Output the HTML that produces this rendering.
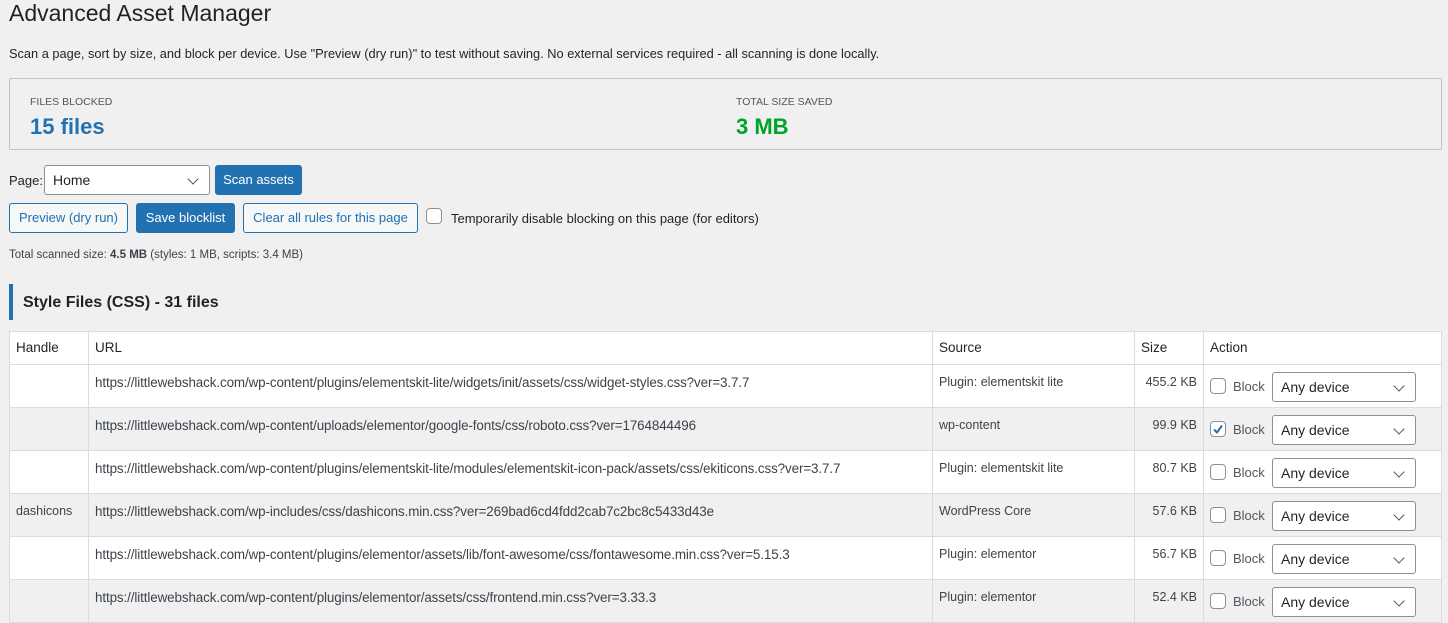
<!DOCTYPE html>
<html><head><meta charset="utf-8"><style>
*{box-sizing:border-box}
body{margin:0;background:#f0f0f1;font-family:"Liberation Sans",sans-serif;color:#1d2327;font-size:13px;width:1448px;height:623px;overflow:hidden;position:relative}
.a{position:absolute;white-space:nowrap}
h1{position:absolute;left:9px;top:0;margin:0;font-size:23px;font-weight:400;line-height:26px}
.box{position:absolute;left:9px;top:78px;width:1433px;height:72px;border:1px solid #c3c4c7;background:#f0f0f1;border-radius:2px}
.lbl{font-size:10.5px;color:#50575e;text-transform:uppercase}
.big{font-size:22px;font-weight:600}
.btn{position:absolute;height:30px;border:1px solid #2271b1;border-radius:3px;color:#2271b1;background:#f6f7f7;font-size:13px;line-height:28px;text-align:center}
.pri{background:#2271b1;color:#fff}
.sel{position:absolute;background:#fff;border:1px solid #8c8f94;border-radius:3px;font-size:14px;padding-left:8px;line-height:28px}
.sel:after{content:"";position:absolute;right:12px;top:9px;width:7px;height:7px;border-right:1.6px solid #50575e;border-bottom:1.6px solid #50575e;transform:rotate(45deg)}
.cb{position:absolute;width:16px;height:16px;border:1px solid #8c8f94;border-radius:4px;background:#fff}
table{position:absolute;left:9px;top:331px;width:1433px;border-collapse:collapse;background:#fff;table-layout:fixed}
td,th{border:1px solid #dcdcde;font-weight:400;text-align:left;vertical-align:top;padding:10px 6px 8px;font-size:12.5px;color:#3c434a;position:relative;white-space:nowrap}
td.u{font-size:13.4px;letter-spacing:-0.1px}
th{height:33px;padding:8px 6px;font-size:13.5px;color:#1d2327}
td{height:43px}
tr.g td{background:#f0f0f1}
td.s{text-align:right}
</style></head><body>
<h1>Advanced Asset Manager</h1>
<div class="a" style="left:9px;top:46px;font-size:12.8px">Scan a page, sort by size, and block per device. Use "Preview (dry run)" to test without saving. No external services required - all scanning is done locally.</div>
<div class="box">
<div class="a lbl" style="left:20px;top:17px">Files blocked</div>
<div class="a big" style="left:20px;top:35px;color:#2271b1">15 files</div>
<div class="a lbl" style="left:726px;top:17px">Total size saved</div>
<div class="a big" style="left:726px;top:35px;color:#00a32a">3 MB</div>
</div>
<div class="a" style="left:9px;top:173px">Page:</div>
<div class="sel" style="left:44px;top:165px;width:166px;height:30px">Home</div>
<div class="btn pri" style="left:215px;top:165px;width:87px">Scan assets</div>
<div class="btn" style="left:9px;top:203px;width:119px">Preview (dry run)</div>
<div class="btn pri" style="left:136px;top:203px;width:99px">Save blocklist</div>
<div class="btn" style="left:243px;top:203px;width:175px">Clear all rules for this page</div>
<div class="cb" style="left:426px;top:208px"></div>
<div class="a" style="left:451px;top:211px">Temporarily disable blocking on this page (for editors)</div>
<div class="a" style="left:9px;top:249px;font-size:11.5px;color:#3c434a">Total scanned size: <b>4.5 MB</b> (styles: 1 MB, scripts: 3.4 MB)</div>
<div class="a" style="left:9px;top:284px;width:4px;height:36px;background:#2271b1"></div>
<div class="a" style="left:23px;top:294px;font-size:16px;font-weight:600">Style Files (CSS) - 31 files</div>
<table>
<tr><th style="width:79px">Handle</th><th style="width:844px">URL</th><th style="width:202px">Source</th><th style="width:69px">Size</th><th>Action</th></tr>
<tr><td></td><td class="u">https://littlewebshack.com/wp-content/plugins/elementskit-lite/widgets/init/assets/css/widget-styles.css?ver=3.7.7</td><td>Plugin: elementskit lite</td><td class="s">455.2 KB</td><td></td></tr>
<tr class="g"><td></td><td class="u">https://littlewebshack.com/wp-content/uploads/elementor/google-fonts/css/roboto.css?ver=1764844496</td><td>wp-content</td><td class="s">99.9 KB</td><td></td></tr>
<tr><td></td><td class="u">https://littlewebshack.com/wp-content/plugins/elementskit-lite/modules/elementskit-icon-pack/assets/css/ekiticons.css?ver=3.7.7</td><td>Plugin: elementskit lite</td><td class="s">80.7 KB</td><td></td></tr>
<tr class="g"><td>dashicons</td><td class="u">https://littlewebshack.com/wp-includes/css/dashicons.min.css?ver=269bad6cd4fdd2cab7c2bc8c5433d43e</td><td>WordPress Core</td><td class="s">57.6 KB</td><td></td></tr>
<tr><td></td><td class="u">https://littlewebshack.com/wp-content/plugins/elementor/assets/lib/font-awesome/css/fontawesome.min.css?ver=5.15.3</td><td>Plugin: elementor</td><td class="s">56.7 KB</td><td></td></tr>
<tr class="g"><td></td><td class="u">https://littlewebshack.com/wp-content/plugins/elementor/assets/css/frontend.min.css?ver=3.33.3</td><td>Plugin: elementor</td><td class="s">52.4 KB</td><td></td></tr>
</table>
<div id="acts"></div>
<script>
var h='';for(var i=0;i<6;i++){var y=364+i*43;
h+='<div class="cb" style="left:1210px;top:'+(y+14)+'px">'+(i==1?'<svg width="14" height="14" viewBox="0 0 14 14" style="position:absolute;left:0;top:0"><path d="M3 7.5l3 3 5-7" fill="none" stroke="#2271b1" stroke-width="2"/></svg>':'')+'</div>';
h+='<div class="a" style="left:1233px;top:'+(y+15)+'px;color:#50575e">Block</div>';
h+='<div class="sel" style="left:1272px;top:'+(y+8)+'px;width:144px;height:30px">Any device</div>';}
document.getElementById('acts').innerHTML=h;
</script>
</body></html>
